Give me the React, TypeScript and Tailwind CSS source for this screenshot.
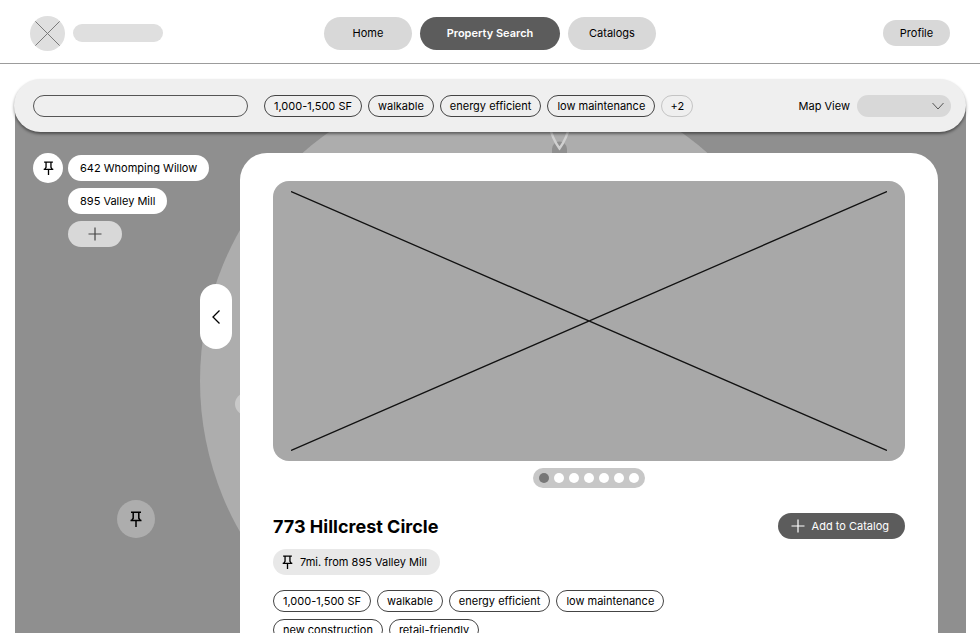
import { useState } from "react";
import clsx from "clsx";

const navItems = [
  { label: "Home", width: "w-[88px]" },
  { label: "Property Search", width: "w-[140px]" },
  { label: "Catalogs", width: "w-[88px]" },
];

const filters = ["1,000-1,500 SF", "walkable", "energy efficient", "low maintenance"];
const propertyTags = [...filters, "new construction", "retail-friendly"];

function PinIcon({ className }: { className?: string }) {
  return (
    <svg viewBox="0 0 12 16" fill="none" stroke="currentColor" strokeWidth="1.5" className={className}>
      <path d="M1 1.2h10M3.2 1.2v6L1.8 9.2M8.8 1.2v6l1.4 2M0.5 9.5h11M6 9.5V16" />
    </svg>
  );
}

function PlusIcon({ className }: { className?: string }) {
  return (
    <svg viewBox="0 0 14 14" fill="none" stroke="currentColor" strokeWidth="1.2" className={className}>
      <path d="M7 0.5v13M0.5 7h13" />
    </svg>
  );
}

function Tag({ label }: { label: string }) {
  return (
    <button className="h-[22px] rounded-full border border-[#444] px-[9px] whitespace-nowrap">
      {label}
    </button>
  );
}

function Header() {
  return (
    <header className="grid h-16 shrink-0 grid-cols-[1fr_auto_1fr] items-center border-b border-[#9c9c9c] px-[30px] pt-[3px]">
      <div className="flex items-center gap-2">
        <svg viewBox="0 0 36 36" className="size-[35px]" stroke="#777">
          <circle cx="18" cy="18" r="18" fill="#dfdfdf" stroke="none" />
          <path d="M5.5 5.5l25 25M30.5 5.5l-25 25" />
        </svg>
        <div className="h-[18px] w-[90px] rounded-full bg-[#dfdfdf]" />
      </div>
      <nav className="flex gap-2">
        {navItems.map((item) => (
          <a
            key={item.label}
            href="#"
            className={clsx(
              "flex h-[33px] items-center justify-center rounded-full",
              item.width,
              item.label === "Property Search"
                ? "bg-[#5c5c5c] font-semibold text-white"
                : "bg-[#d8d8d8]"
            )}
          >
            {item.label}
          </a>
        ))}
      </nav>
      <button className="h-[26px] w-[67px] justify-self-end rounded-full bg-[#d8d8d8]">
        Profile
      </button>
    </header>
  );
}

function Toolbar() {
  return (
    <div className="relative z-10 flex h-[53px] items-center rounded-full bg-[#efefef] pr-[15px] pl-[19px] shadow-[0_2px_3px_rgba(0,0,0,0.45)]">
      <input
        type="text"
        aria-label="Search properties"
        className="h-[22px] w-[215px] rounded-full border border-[#555] px-3 outline-none"
      />
      <div className="ml-4 flex gap-[6px]">
        {filters.map((label) => (
          <Tag key={label} label={label} />
        ))}
        <button className="h-[22px] w-8 rounded-full border border-[#c4c4c4]">+2</button>
      </div>
      <label htmlFor="map-view" className="ml-auto">
        Map View
      </label>
      <div className="relative ml-[7px]">
        <select
          id="map-view"
          className="block h-[22px] w-[94px] appearance-none rounded-full bg-[#d8d8d8] px-3 outline-none"
        >
          <option value="" aria-label="Default"></option>
        </select>
        <svg
          viewBox="0 0 12 8"
          fill="none"
          stroke="#555"
          className="pointer-events-none absolute top-[7px] right-[7px] h-2 w-3"
        >
          <path d="M0.5 1L6 7l5.5-6" />
        </svg>
      </div>
    </div>
  );
}

function MapBackground() {
  return (
    <svg className="absolute inset-0 size-full" fill="none">
      <circle cx="490" cy="276" r="305" fill="#adadad" />
      <path d="M537 48v-4a7.5 7.5 0 0 1 15 0v4z" fill="#8f8f8f" />
      <path d="M535 22q2 11 9.5 21.5q7.5 -10.5 9.5 -21.5" stroke="#d0d0d0" strokeWidth="2.4" />
      <circle cx="231" cy="299" r="11" fill="#c9c9c9" />
    </svg>
  );
}

function SavedPlaces() {
  return (
    <div className="flex items-start gap-[5px] pl-[18px]">
      <button
        aria-label="Pinned places"
        className="flex size-[30px] items-center justify-center rounded-full bg-white"
      >
        <PinIcon className="h-[14px] w-[11px]" />
      </button>
      <div className="flex flex-col items-start gap-[7px] pt-[2px]">
        <button className="h-[26px] rounded-full bg-white px-3">642 Whomping Willow</button>
        <button className="h-[26px] rounded-full bg-white px-3">895 Valley Mill</button>
        <button
          aria-label="Add place"
          className="flex h-[26px] w-[54px] items-center justify-center rounded-full bg-[#d8d8d8] text-[#444]"
        >
          <PlusIcon className="size-[14px]" />
        </button>
      </div>
    </div>
  );
}

function PropertyCard() {
  const [slide, setSlide] = useState(0);

  return (
    <article className="relative min-w-0 flex-1 rounded-t-[27px] bg-white px-[33px] pt-7">
      <div className="h-[280px] rounded-2xl bg-[#a8a8a8] px-[18px] py-[10px]">
        <svg viewBox="0 0 596 260" preserveAspectRatio="none" className="size-full" stroke="#111" strokeWidth="1.3">
          <path d="M0 0.5L596 259.5M596 0.5L0 259.5" />
        </svg>
      </div>
      <div className="mx-auto mt-[7px] flex h-5 w-[112px] items-center justify-center gap-[5px] rounded-full bg-[#c7c7c7]">
        {[0, 1, 2, 3, 4, 5, 6].map((i) => (
          <button
            key={i}
            aria-label={`Photo ${i + 1}`}
            onClick={() => setSlide(i)}
            className={clsx("size-[10px] rounded-full", i === slide ? "bg-[#777]" : "bg-white")}
          />
        ))}
      </div>
      <div className="mt-[25px] flex items-center justify-between">
        <h1 className="pt-[2px] text-[18px] leading-5 font-bold">773 Hillcrest Circle</h1>
        <button className="flex h-[26px] items-center gap-[7px] rounded-full bg-[#5c5c5c] pr-4 pl-[13px] text-white">
          <PlusIcon className="size-[14px]" />
          Add to Catalog
        </button>
      </div>
      <button className="mt-[10px] flex h-[26px] items-center gap-[7px] rounded-full bg-[#e8e8e8] pr-[13px] pl-[9px]">
        <PinIcon className="h-[14px] w-[11px]" />
        7mi. from 895 Valley Mill
      </button>
      <div className="mt-[15px] flex max-w-md flex-wrap gap-x-[6px] gap-y-[7px]">
        {propertyTags.map((label) => (
          <Tag key={label} label={label} />
        ))}
      </div>
    </article>
  );
}

export default function App() {
  return (
    <div className="flex h-screen flex-col overflow-hidden bg-white font-['Inter',sans-serif] text-[11px] leading-4 text-black">
      <Header />
      <main className="flex min-h-0 flex-1 flex-col px-[14px] pt-[15px]">
        <Toolbar />
        <section className="relative -mt-[27px] ml-px flex min-h-0 flex-1 overflow-hidden bg-[#8f8f8f] pt-12 pr-7">
          <MapBackground />
          <div className="relative w-[225px] shrink-0">
            <SavedPlaces />
            <button
              aria-label="Collapse listing"
              className="absolute top-[131px] right-2 flex h-[65px] w-8 items-center justify-center rounded-full bg-white"
            >
              <svg viewBox="0 0 8 14" fill="none" stroke="currentColor" strokeWidth="1.3" className="h-[14px] w-2">
                <path d="M7.5 0.5L1 7l6.5 6.5" />
              </svg>
            </button>
            <button
              aria-label="Map pin"
              className="absolute top-[347px] left-[102px] flex size-[38px] items-center justify-center rounded-full bg-[#adadad]"
            >
              <PinIcon className="h-4 w-3" />
            </button>
          </div>
          <PropertyCard />
        </section>
      </main>
    </div>
  );
}
